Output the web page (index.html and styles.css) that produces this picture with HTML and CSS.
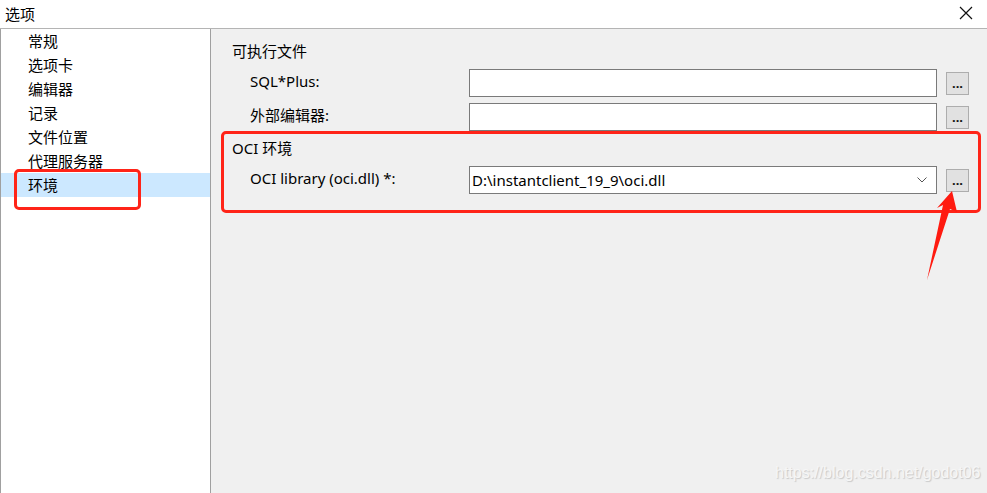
FILE: index.html
```html
<!DOCTYPE html>
<html lang="zh-CN">

<head>
    <meta charset="utf-8">
    <meta name="viewport" content="width=device-width, initial-scale=1.0">
    <title>选项</title>
    <link rel="stylesheet" href="styles.css">
</head>

<body>
    <div class="dialog">
        <!-- barra de título -->
        <div class="titlebar">
            <span class="title">选项</span>
            <svg class="close" width="14" height="14" viewBox="0 0 14 14">
                <path d="M1 1 L13 13 M13 1 L1 13" stroke="#111" stroke-width="1.2" fill="none" />
            </svg>
        </div>

        <div class="main">
            <ul class="sidebar">
                <li>常规</li>
                <li>选项卡</li>
                <li>编辑器</li>
                <li>记录</li>
                <li>文件位置</li>
                <li>代理服务器</li>
                <li class="selected">环境</li>
            </ul>

            <div class="content">
                <div class="section">可执行文件</div>
                <div class="row">
                    <label class="row-label">SQL*Plus:</label>
                    <div class="input"></div>
                    <button type="button" class="browse">...</button>
                </div>
                <div class="row row-second">
                    <label class="row-label">外部编辑器:</label>
                    <div class="input"></div>
                    <button type="button" class="browse">...</button>
                </div>

                <div class="section section-oci">OCI 环境</div>
                <div class="row">
                    <label class="row-label">OCI library (oci.dll) *:</label>
                    <div class="input combo">
                        <span>D:\instantclient_19_9\oci.dll</span>
                        <svg class="chevron" width="10" height="6" viewBox="0 0 10 6">
                            <path d="M0.5 0.5 L5 5 L9.5 0.5" stroke="#555" stroke-width="1" fill="none" />
                        </svg>
                    </div>
                    <button type="button" class="browse">...</button>
                </div>
            </div>
        </div>

        <!-- anotações em vermelho -->
        <div class="mark mark-item"></div>
        <div class="mark mark-oci"></div>
        <svg class="arrow" width="987" height="493" viewBox="0 0 987 493">
            <polygon points="952,191 957,212 950,209 927,280 943,205 937,208" fill="#ff1a10" />
        </svg>

        <div class="watermark">https://blog.csdn.net/godot06</div>
    </div>
</body>

</html>
```

FILE: styles.css
```css
/* Página */
body {
    margin: 0;
    background-color: #f0f0f0;
}

body,
button,
label {
    font-family: "Noto Sans", "Noto Sans CJK SC", sans-serif;
    font-size: 15px;
    color: #000;
}

.dialog {
    position: relative;
    width: 987px;
    height: 493px;
    overflow: hidden;
    display: flex;
    flex-direction: column;
}

/* Barra de título */
.titlebar {
    height: 28px;
    background: #fff;
    border-bottom: 1px solid #b4b4b4;
    display: flex;
    align-items: center;
    justify-content: space-between;
    padding: 0 14px 0 5px;
    flex-shrink: 0;
}

.title {
    line-height: 20px;
    margin-top: -1px;
}

.close {
    margin-top: -3px;
}

.main {
    flex: 1;
    display: flex;
}

/* Lista da esquerda */
.sidebar {
    list-style: none;
    margin: 0;
    padding: 0;
    width: 209px;
    background: #fff;
    border-left: 1px solid #a0a0a0;
    border-right: 1px solid #a0a0a0;
}

.sidebar li {
    height: 24px;
    line-height: 24px;
    padding-left: 27px;
}

.sidebar .selected {
    background: #cce8ff;
}

/* Conteúdo */
.content {
    flex: 1;
    padding: 12px 0 0 21px;
}

.section {
    line-height: 20px;
}

.section-oci {
    margin-top: 7px;
}

.row {
    display: flex;
    align-items: center;
    margin-top: 8px;
    padding-left: 18px;
}

.row-second {
    margin-top: 6px;
}

.row-label {
    width: 219px;
    line-height: 20px;
    margin-bottom: 4px;
}

.input {
    width: 466px;
    height: 26px;
    background: #fff;
    border: 1px solid #7a7a7a;
}

.combo {
    display: flex;
    align-items: center;
    justify-content: space-between;
    padding: 0 9px 0 2px;
    width: 455px;
}

.combo span {
    line-height: 20px;
}

.browse {
    width: 23px;
    height: 23px;
    margin-left: 9px;
    margin-top: 1px;
    padding: 0 0 6px;
    background: #e1e1e1;
    border: 1px solid #adadad;
    font-size: 13px;
    font-weight: bold;
    line-height: 10px;
    color: #111;
    display: flex;
    align-items: flex-end;
    justify-content: center;
}

/* Anotações */
.mark {
    position: absolute;
    border: 3px solid #ff2418;
    border-radius: 5px;
}

.mark-item {
    left: 14px;
    top: 169px;
    width: 121px;
    height: 35px;
}

.mark-oci {
    left: 221px;
    top: 131px;
    width: 754px;
    height: 76px;
}

.arrow {
    position: absolute;
    left: 0;
    top: 0;
}

.watermark {
    position: absolute;
    left: 775px;
    top: 464px;
    font-family: "Liberation Sans", Arial, sans-serif;
    font-size: 16px;
    color: #f6f6f6;
    text-shadow: 1px 1px 1px #c8c8c8;
}
```
